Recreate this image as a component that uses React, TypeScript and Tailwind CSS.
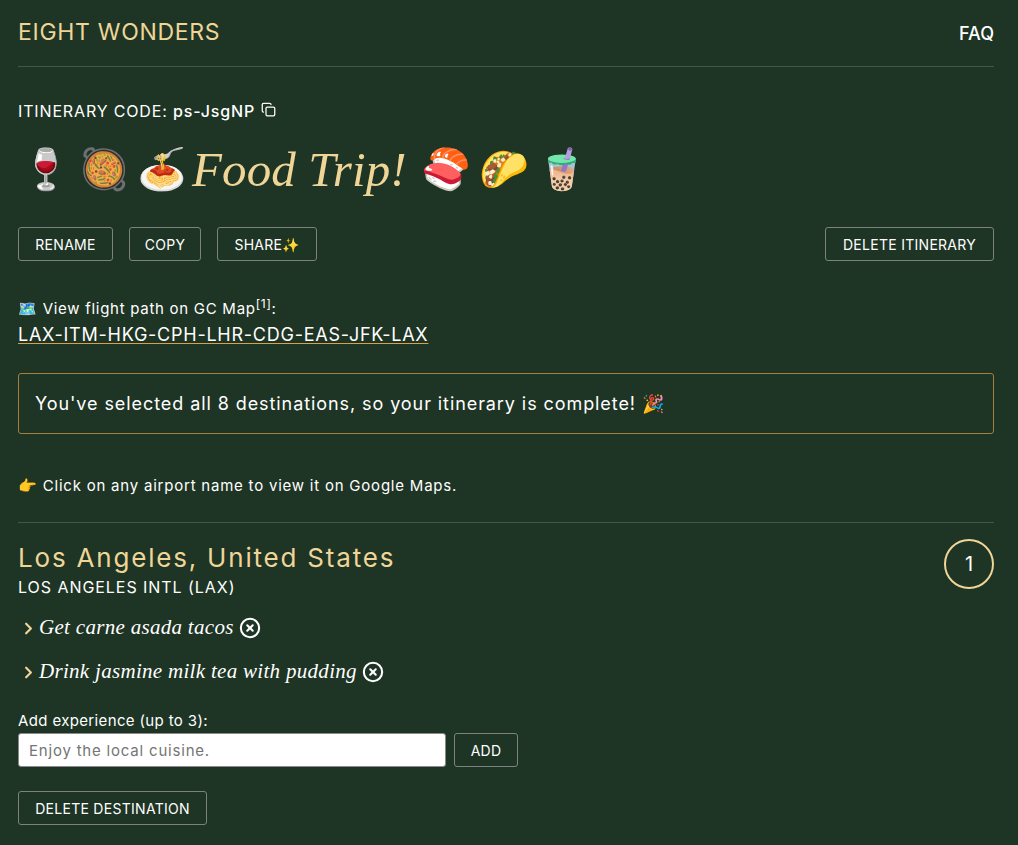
import React from 'react';
import { Copy, ChevronRight, CircleX } from 'lucide-react';

const sans = "font-['Inter','Noto_Sans',sans-serif]";
const btn = 'h-[34px] border border-[#7c837e] rounded-[3px] text-[14px] tracking-[0.02em] text-white flex items-center justify-center';

function Experience({ text }: { text: string }) {
  return (
    <div className="flex items-center h-[24px] pl-[1px]">
      <ChevronRight className="w-[19px] h-[19px] text-[#efd698]" strokeWidth={2.75} />
      <span className="ml-[1px] font-['Liberation_Serif',serif] italic text-[21px] tracking-[0.3px] text-white">{text}</span>
      <CircleX className="w-[22px] h-[22px] ml-[5px] text-white" strokeWidth={2.25} />
    </div>
  );
}

function Emoji({ char }: { char: string }) {
  return <span className="not-italic text-[40px] leading-none tracking-normal">{char}</span>;
}

export default function App() {
  return (
    <div className={`${sans} w-[1018px] h-[845px] overflow-hidden bg-[#1e3424] text-white pl-[18px] pr-[24px]`}>
      <header className="h-[67px] border-b border-[#46544f] flex items-center justify-between pb-[2px]">
        <div className="text-[23px] tracking-[0.7px] text-[#efd698]">EIGHT WONDERS</div>
        <div className="text-[18px] font-medium mt-[2px]">FAQ</div>
      </header>

      <div className="mt-[34px] flex items-start text-[16px] h-[20px] leading-[20px] tracking-[0.85px]">
        <span>ITINERARY CODE:&nbsp;</span>
        <span className="font-medium">ps-JsgNP</span>
        <Copy className="w-[15px] h-[15px] ml-[6px] mt-[1px]" strokeWidth={2} />
      </div>

      <h1 className="mt-[17px] h-[64px] flex items-center text-[49px] tracking-[0.1px] font-normal text-[#efd698] font-['Liberation_Serif',serif] italic pl-[3px]">
        <span className="flex items-center gap-[8px] mr-[5px]">
          <Emoji char="🍷" />
          <Emoji char="🥘" />
          <Emoji char="🍝" />
        </span>
        <span>Food Trip!</span>
        <span className="flex items-center gap-[8px] ml-[14px]">
          <Emoji char="🍣" />
          <Emoji char="🌮" />
          <Emoji char="🧋" />
        </span>
      </h1>

      <div className="mt-[25px] flex gap-4">
        <button className={`${btn} w-[95px]`}>RENAME</button>
        <button className={`${btn} w-[72px]`}>COPY</button>
        <button className={`${btn} w-[100px]`}>SHARE✨</button>
        <button className={`${btn} w-[169px] ml-auto`}>DELETE ITINERARY</button>
      </div>

      <div className="mt-[36px] text-[15px] leading-[24px] tracking-[0.72px]">
        🗺️ View flight path on GC Map<sup className="text-[12px]">[1]</sup>:
      </div>
      <a className="block w-fit text-[18px] leading-[26px] tracking-[0.75px] underline decoration-[#d3a24a] underline-offset-[2px] mt-[1px]">LAX-ITM-HKG-CPH-LHR-CDG-EAS-JFK-LAX</a>

      <div className="mt-[25px] h-[61px] border border-[#a67f3d] rounded-[3px] flex items-center px-4 text-[18px] tracking-[0.92px]">
        You've selected all 8 destinations, so your itinerary is complete! 🎉
      </div>

      <div className="mt-[40px] text-[15px] leading-[24px] tracking-[0.78px]">👉 Click on any airport name to view it on Google Maps.</div>

      <section className="mt-[24px] border-t border-[#46544f] pt-[17px] relative">
        <div className="absolute right-0 top-[16px] w-[50px] h-[50px] rounded-full border-2 border-[#efd698] flex items-center justify-center text-[20px]">1</div>
        <h2 className="text-[26px] leading-[36px] tracking-[1.8px] text-[#efd698]">Los Angeles, United States</h2>
        <div className="text-[16px] leading-[20px] mt-[1px] tracking-[0.95px]">LOS ANGELES INTL (LAX)</div>
        <div className="mt-[19px] flex flex-col gap-[20px]">
          <Experience text="Get carne asada tacos" />
          <Experience text="Drink jasmine milk tea with pudding" />
        </div>
        <label className="block mt-[27px] text-[15px] leading-[20px] tracking-[0.36px]">Add experience (up to 3):</label>
        <div className="mt-[2px] flex gap-2 items-center">
          <input
            placeholder="Enjoy the local cuisine."
            className="w-[428px] h-[34px] bg-white rounded-[3px] border border-[#8a8a8a] px-[10px] text-[15px] tracking-[0.8px] text-black placeholder:text-[#757575]"
          />
          <button className={`${btn} w-[64px]`}>ADD</button>
        </div>
        <button className={`${btn} w-[189px] mt-[24px]`}>DELETE DESTINATION</button>
      </section>
    </div>
  );
}
